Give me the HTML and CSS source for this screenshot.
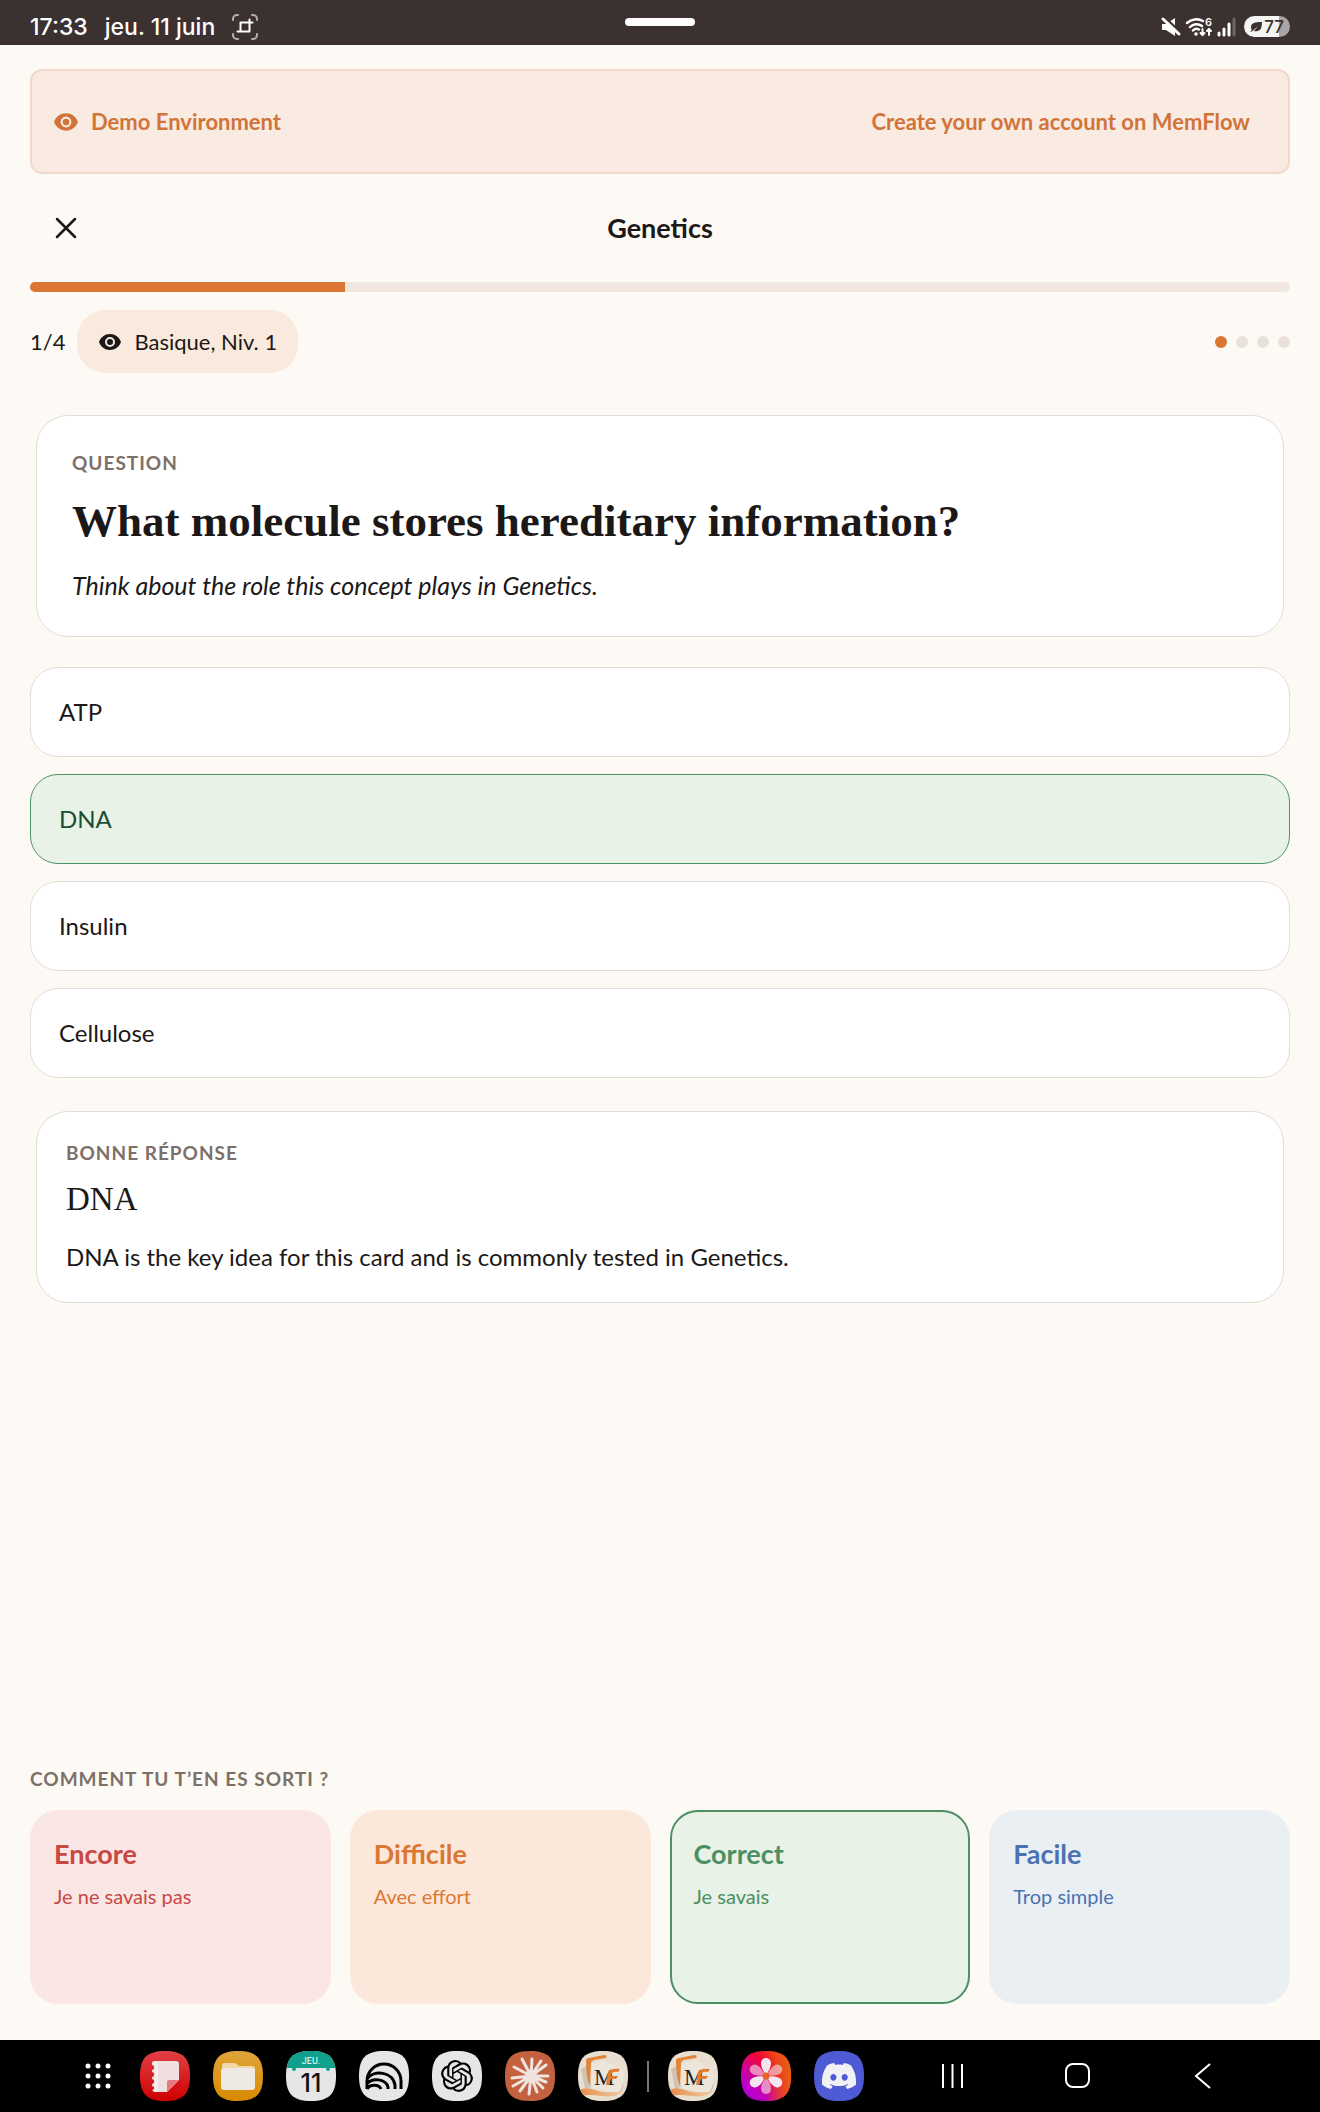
FILE: index.html
```html
<!DOCTYPE html>
<html lang="fr">
<head>
    <meta charset="UTF-8">
    <meta name="viewport" content="width=device-width, initial-scale=1.0">
    <title>MemFlow - Genetics</title>
    <link rel="stylesheet" href="styles.css">
</head>
<body>
    <header class="status-bar">
        <div class="status-left">
            <span>17:33</span>
            <span>jeu. 11 juin</span>
            <svg width="26" height="26" viewBox="0 0 26 26" fill="none" stroke="#fff" stroke-linecap="round">
                <path d="M1 6V5a4 4 0 0 1 4-4h1M20 1h1a4 4 0 0 1 4 4v1M25 20v1a4 4 0 0 1-4 4h-1M6 25H5a4 4 0 0 1-4-4v-1" stroke="#b5afae" stroke-width="2"/>
                <path d="M8.500 8.500h12M8.500 8.500v9M5.500 17.500h12M17.500 5.500v12" stroke-width="2"/>
            </svg>
        </div>
        <div class="drag-handle"></div>
        <div class="status-right">
            <svg width="20" height="20" viewBox="0 0 20 20">
                <path d="M1 7h4l9-6v18l-9-6H1z" fill="#fff"/>
                <path d="M3 0l17 16" stroke="#3b3130" stroke-width="3"/>
                <path d="M2 2l16 15" stroke="#fff" stroke-width="3" stroke-linecap="round"/>
            </svg>
            <svg width="28" height="20" viewBox="0 0 28 20" fill="none" stroke="#fff" stroke-width="2.500" stroke-linecap="round">
                <path d="M2 6a14 14 0 0 1 16-2M5 10a9 9 0 0 1 12-1M8 13.500a5 5 0 0 1 6-1"/>
                <circle cx="11" cy="17" r="1.800" fill="#fff" stroke="none"/>
                <path d="M17.500 12v6m-2-2l2 2 2-2M24 18v-6m-2 2l2-2 2 2" stroke-width="2"/>
                <text x="20" y="9" class="wifi-mark">6</text>
            </svg>
            <svg width="20" height="20" viewBox="0 0 20 20" stroke="#fff" stroke-width="3" stroke-linecap="round">
                <path d="M2 16v2M7 12v6M12 7v11"/>
                <path d="M17 2v16" stroke="#6f6766"/>
            </svg>
            <span class="battery">
                <svg width="12" height="10" viewBox="0 0 12 10"><path d="M12 0C5 0 1 1 1 5c0 1 0 2 1 3L0 9.500h2L8 4 4 9c5 1 8-1 8-9z" fill="#3b3130"/></svg>
                77
            </span>
        </div>
    </header>

    <main class="page">
        <div class="banner">
            <div class="banner-label">
                <svg width="26" height="26" viewBox="0 0 24 24" fill="currentColor"><path d="M12 4C7 4 2.700 7.100 1 12c1.700 4.900 6 8 11 8s9.300-3.100 11-8c-1.700-4.900-6-8-11-8zm0 13a5 5 0 1 1 0-10 5 5 0 0 1 0 10zm0-8a3 3 0 1 0 0 6 3 3 0 0 0 0-6z"/></svg>
                <span>Demo Environment</span>
            </div>
            <a href="#">Create your own account on MemFlow</a>
        </div>

        <div class="deck-header">
            <button class="close-button" aria-label="Fermer">
                <svg width="22" height="22" viewBox="0 0 22 22" stroke="currentColor" stroke-width="2.500" stroke-linecap="round"><path d="M2 2l18 18M20 2L2 20"/></svg>
            </button>
            <h1>Genetics</h1>
        </div>

        <div class="progress" role="progressbar" aria-valuenow="25" aria-valuemin="0" aria-valuemax="100" aria-label="Progression">
            <div class="progress-fill" style="width: 25%"></div>
        </div>

        <div class="card-info">
            <span>1/4</span>
            <span class="level-chip">
                <svg width="24" height="24" viewBox="0 0 24 24" fill="currentColor"><path d="M12 4C7 4 2.700 7.100 1 12c1.700 4.900 6 8 11 8s9.300-3.100 11-8c-1.700-4.900-6-8-11-8zm0 13a5 5 0 1 1 0-10 5 5 0 0 1 0 10zm0-8a3 3 0 1 0 0 6 3 3 0 0 0 0-6z"/></svg>
                <span>Basique, Niv. 1</span>
            </span>
            <div class="dots">
                <span class="dot active"></span>
                <span class="dot"></span>
                <span class="dot"></span>
                <span class="dot"></span>
            </div>
        </div>

        <section class="card question">
            <p class="eyebrow">QUESTION</p>
            <h2>What molecule stores hereditary information?</h2>
            <p class="hint">Think about the role this concept plays in Genetics.</p>
        </section>

        <div class="options">
            <button class="option">ATP</button>
            <button class="option correct">DNA</button>
            <button class="option">Insulin</button>
            <button class="option">Cellulose</button>
        </div>

        <section class="card answer">
            <p class="eyebrow">BONNE RÉPONSE</p>
            <h3>DNA</h3>
            <p>DNA is the key idea for this card and is commonly tested in Genetics.</p>
        </section>

        <section class="rating">
            <p class="eyebrow">COMMENT TU T’EN ES SORTI ?</p>
            <div class="rating-grid">
                <button class="rate again"><strong>Encore</strong><span>Je ne savais pas</span></button>
                <button class="rate hard"><strong>Difficile</strong><span>Avec effort</span></button>
                <button class="rate good"><strong>Correct</strong><span>Je savais</span></button>
                <button class="rate easy"><strong>Facile</strong><span>Trop simple</span></button>
            </div>
        </section>
    </main>

    <svg class="defs" width="0" height="0" aria-hidden="true">
        <defs>
            <path id="tile" d="M25 0C43 0 50 7 50 25S43 50 25 50 0 43 0 25 7 0 25 0z"/>
            <clipPath id="tile-clip"><use href="#tile"/></clipPath>
            <linearGradient id="red" x2="0" y2="1"><stop stop-color="#e04045"/><stop offset="1" stop-color="#cf0000"/></linearGradient>
            <linearGradient id="amber" x2="0" y2="1"><stop stop-color="#dfa53a"/><stop offset="1" stop-color="#d88a00"/></linearGradient>
            <linearGradient id="bloom" x1="0" y1="1" x2="1" y2="0"><stop stop-color="#a800e8"/><stop offset=".25" stop-color="#c000c0"/><stop offset=".6" stop-color="#f0063c"/><stop offset="1" stop-color="#f06000"/></linearGradient>
            <linearGradient id="bloom-warm" x2="1" y2="0"><stop offset=".5" stop-color="#e86010" stop-opacity="0"/><stop offset="1" stop-color="#e86010"/></linearGradient>
            <linearGradient id="wave" x2="1" y2="0"><stop stop-color="#e88a45"/><stop offset="1" stop-color="#eccfa9"/></linearGradient>
            <symbol id="memflow" viewBox="0 0 50 50">
                <g clip-path="url(#tile-clip)">
                    <path d="M0 0h50v50H0z" fill="#e8dfd1"/>
                    <path d="M3 18l4 20 6-2-3-22z" fill="#cfc3b4"/>
                    <path d="M8 10q0-3 3-3l15-3q4 0 2 3l-12 2q-3 1-3 4l-1 22q-4-8-4-25z" fill="#e2853a"/>
                    <path d="M14 12l13-3 14 8q5 1 5 6l-3 17q-1 4-6 3L13 36z" fill="#ece5da"/>
                    <path d="M17 40q10 5 20 4 6-1 8-10" fill="none" stroke="#c8bcae"/>
                    <path d="M0 40q7-5 17-1t29 1q-8 7-22 5T0 45z" fill="url(#wave)"/>
                </g>
                <text x="16" y="34" class="logo-m">M</text>
                <path d="M32 19q4-2 10-1l-2 3q-4-1-6 1l-1 3h7l-2 3h-5l-2 6h-3l2-12z" fill="#e47b2c"/>
            </symbol>
        </defs>
    </svg>

    <nav class="taskbar">
        <div class="apps">
            <button class="app-drawer" aria-label="Applications">
                <svg width="26" height="26" viewBox="0 0 26 26" fill="#fff">
                    <circle cx="3" cy="3" r="2.500"/><circle cx="13" cy="3" r="2.500"/><circle cx="23" cy="3" r="2.500"/>
                    <circle cx="3" cy="13" r="2.500"/><circle cx="13" cy="13" r="2.500"/><circle cx="23" cy="13" r="2.500"/>
                    <circle cx="3" cy="23" r="2.500"/><circle cx="13" cy="23" r="2.500"/><circle cx="23" cy="23" r="2.500"/>
                </svg>
            </button>
            <button aria-label="Notes">
                <svg viewBox="0 0 50 50">
                    <use href="#tile" fill="url(#red)"/>
                    <path d="M14 10h22q3 0 3 3v16l-12 12H14l-2-2q3-1 2-3l-2-1v-2q3-1 2-4l-2-1v-2q3-1 2-4l-2-1v-2q3-1 2-4l-2-1v-3z" fill="#efdfdf"/>
                    <path d="M14 10h4v31h-4z" fill="#fff" opacity=".4"/>
                    <path d="M27 41V31q0-2 2-2h10z" fill="#e57b7c"/>
                    <path d="M27 42l13-13v13z" fill="#d40d10"/>
                </svg>
            </button>
            <button aria-label="Mes fichiers">
                <svg viewBox="0 0 50 50">
                    <use href="#tile" fill="url(#amber)"/>
                    <path d="M9 15q0-3 3-3h10l4 3h13q3 0 3 3v10H9z" fill="#f0d9a8"/>
                    <rect x="8" y="17" width="34" height="22" rx="3" fill="#eee9e2"/>
                </svg>
            </button>
            <button aria-label="Calendrier">
                <svg viewBox="0 0 50 50">
                    <use href="#tile" fill="#e6e6e6"/>
                    <path d="M0 17h50v-17H0z" fill="#10a08c" clip-path="url(#tile-clip)"/>
                    <circle cx="8" cy="18" r="2" fill="#10a08c"/><circle cx="42" cy="18" r="2" fill="#10a08c"/>
                    <text x="25" y="13" class="cal-day">JEU.</text>
                    <text x="25" y="41" class="cal-date">11</text>
                </svg>
            </button>
            <button aria-label="NotebookLM">
                <svg viewBox="0 0 50 50">
                    <use href="#tile" fill="#e6e6e6"/>
                    <path d="M8 38v-8a17 17 0 0 1 34 0v8M8 28c7-10 26-7 28 6v4M8 33c5-7 19-5 21 3v2M8 38c3-5 12-5 14 0" fill="none" stroke="#000" stroke-width="3"/>
                </svg>
            </button>
            <button aria-label="ChatGPT">
                <svg viewBox="0 0 50 50">
                    <use href="#tile" fill="#e6e6e6"/>
                    <path transform="translate(9 9) scale(1.330)" d="M22.2819 9.8211a5.9847 5.9847 0 0 0-.5157-4.9108 6.0462 6.0462 0 0 0-6.5098-2.9A6.0651 6.0651 0 0 0 4.9807 4.1818a5.9847 5.9847 0 0 0-3.9977 2.9 6.0462 6.0462 0 0 0 .7427 7.0966 5.98 5.98 0 0 0 .511 4.9107 6.051 6.051 0 0 0 6.5146 2.9001A5.9847 5.9847 0 0 0 13.2599 24a6.0557 6.0557 0 0 0 5.7718-4.2058 5.9894 5.9894 0 0 0 3.9977-2.9001 6.0557 6.0557 0 0 0-.7475-7.0729zm-9.022 12.6081a4.4755 4.4755 0 0 1-2.8764-1.0408l.1419-.0804 4.7783-2.7582a.7948.7948 0 0 0 .3927-.6813v-6.7369l2.02 1.1686a.071.071 0 0 1 .038.052v5.5826a4.504 4.504 0 0 1-4.4945 4.4944zm-9.6607-4.1254a4.4708 4.4708 0 0 1-.5346-3.0137l.142.0852 4.783 2.7582a.7712.7712 0 0 0 .7806 0l5.8428-3.3685v2.3324a.0804.0804 0 0 1-.0332.0615L9.74 19.9502a4.4992 4.4992 0 0 1-6.1408-1.6464zM2.3408 7.8956a4.485 4.485 0 0 1 2.3655-1.9728V11.6a.7664.7664 0 0 0 .3879.6765l5.8144 3.3543-2.0201 1.1685a.0757.0757 0 0 1-.071 0l-4.8303-2.7865A4.504 4.504 0 0 1 2.3408 7.872zm16.5963 3.8558L13.1038 8.364 15.1192 7.2a.0757.0757 0 0 1 .071 0l4.8303 2.7913a4.4944 4.4944 0 0 1-.6765 8.1042v-5.6772a.79.79 0 0 0-.407-.667zm2.0107-3.0231l-.142-.0852-4.7735-2.7818a.7759.7759 0 0 0-.7854 0L9.409 9.2297V6.8974a.0662.0662 0 0 1 .0284-.0615l4.8303-2.7866a4.4992 4.4992 0 0 1 6.6802 4.66zM8.3065 12.863l-2.02-1.1638a.0804.0804 0 0 1-.038-.0567V6.0742a4.4992 4.4992 0 0 1 7.3757-3.4537l-.142.0805L8.704 5.459a.7948.7948 0 0 0-.3927.6813zm1.0976-2.3654l2.602-1.4998 2.6069 1.4998v2.9994l-2.5974 1.4997-2.6067-1.4997Z"/>
                </svg>
            </button>
            <button aria-label="Claude">
                <svg viewBox="0 0 50 50">
                    <use href="#tile" fill="#c4623f"/>
                    <path d="M26 25L17 8M26 25l1-17M26 25L36 10M26 25l15-11M26 25l17 0M26 25l15 6M26 25l12 12M26 25l6 16M26 25l-2 18M26 25L15 40M26 25L8 35M26 25L7 27M26 25L9 16" stroke="#efe4de" stroke-width="3" stroke-linecap="round"/>
                    <circle cx="26" cy="25" r="6" fill="#efe4de"/>
                </svg>
            </button>
            <button aria-label="MemFlow"><svg><use href="#memflow"/></svg></button>
            <span class="divider"></span>
            <button aria-label="MemFlow"><svg><use href="#memflow"/></svg></button>
            <button aria-label="Galerie">
                <svg viewBox="0 0 50 50">
                    <use href="#tile" fill="url(#bloom)"/>
                    <use href="#tile" fill="url(#bloom-warm)"/>
                    <g fill="#f3e6ee">
                        <path id="petal" d="M25 24c-3-4-5-8-5-12a5 5 0 0 1 10 0c0 4-2 8-5 12z"/>
                        <use href="#petal" transform="rotate(120 25 25)"/>
                        <use href="#petal" transform="rotate(240 25 25)"/>
                        <use href="#petal" transform="rotate(60 25 25)" opacity=".6"/>
                        <use href="#petal" transform="rotate(180 25 25)" opacity=".6"/>
                        <use href="#petal" transform="rotate(300 25 25)" opacity=".6"/>
                    </g>
                    <circle cx="25" cy="25" r="3.500" fill="#e8641c"/>
                </svg>
            </button>
            <button aria-label="Discord">
                <svg viewBox="0 0 50 50">
                    <use href="#tile" fill="#4f5bd5"/>
                    <path transform="translate(8 8) scale(1.420)" fill="#f1f1f5" d="M20.317 4.3698a19.7913 19.7913 0 0 0-4.8851-1.5152.0741.0741 0 0 0-.0785.0371c-.211.3753-.4447.8648-.6083 1.2495-1.8447-.2762-3.68-.2762-5.4868 0-.1636-.3933-.4058-.8742-.6177-1.2495a.077.077 0 0 0-.0785-.037 19.7363 19.7363 0 0 0-4.8852 1.515.0699.0699 0 0 0-.0321.0277C.5334 9.0458-.319 13.5799.0992 18.0578a.0824.0824 0 0 0 .0312.0561c2.0528 1.5076 4.0413 2.4228 5.9929 3.0294a.0777.0777 0 0 0 .0842-.0276c.4616-.6304.8731-1.2952 1.226-1.9942a.076.076 0 0 0-.0416-.1057c-.6528-.2476-1.2743-.5495-1.8722-.8923a.077.077 0 0 1-.0076-.1277c.1258-.0943.2517-.1923.3718-.2914a.0743.0743 0 0 1 .0776-.0105c3.9278 1.7933 8.18 1.7933 12.0614 0a.0739.0739 0 0 1 .0785.0095c.1202.099.246.1981.3728.2924a.077.077 0 0 1-.0066.1276 12.2986 12.2986 0 0 1-1.873.8914.0766.0766 0 0 0-.0407.1067c.3604.698.7719 1.3628 1.225 1.9932a.076.076 0 0 0 .0842.0286c1.961-.6067 3.9495-1.5219 6.0023-3.0294a.077.077 0 0 0 .0313-.0552c.5004-5.177-.8382-9.6739-3.5485-13.6604a.061.061 0 0 0-.0312-.0286zM8.02 15.3312c-1.1825 0-2.1569-1.0857-2.1569-2.419 0-1.3332.9555-2.4189 2.157-2.4189 1.2108 0 2.1757 1.0952 2.1568 2.419 0 1.3332-.9555 2.4189-2.1569 2.4189zm7.9748 0c-1.1825 0-2.1569-1.0857-2.1569-2.419 0-1.3332.9554-2.4189 2.1569-2.4189 1.2108 0 2.1757 1.0952 2.1568 2.419 0 1.3332-.946 2.4189-2.1568 2.4189Z"/>
                </svg>
            </button>
        </div>
        <div class="system-nav">
            <button aria-label="Récents"><svg viewBox="0 0 50 50" fill="none" stroke="#fff" stroke-width="2"><path d="M16 13v24M25.500 13v24M35 13v24"/></svg></button>
            <button aria-label="Accueil"><svg viewBox="0 0 50 50" fill="none" stroke="#fff" stroke-width="2"><rect x="14" y="13" width="23" height="23" rx="7"/></svg></button>
            <button aria-label="Retour"><svg viewBox="0 0 50 50" fill="none" stroke="#fff" stroke-width="2"><path d="M33 13L19 25l14 12"/></svg></button>
        </div>
    </nav>
</body>
</html>
```
FILE: styles.css
```css
* {
    box-sizing: border-box;
}

body {
    font-family: Lato, sans-serif;
    font-size: 24px;
    line-height: 32px;
    margin: 0;
    min-height: 100vh;
    display: flex;
    flex-direction: column;
    background-color: #fdfaf5;
    color: #1b1817;
}

h1, h2, h3, p {
    margin: 0;
}

button {
    font: inherit;
    color: inherit;
    border: none;
    background: none;
    padding: 0;
    text-align: left;
    cursor: pointer;
}

svg {
    display: block;
    overflow: visible;
}

.defs {
    position: absolute;
}

/* System status bar */
.status-bar {
    display: grid;
    grid-template-columns: 1fr auto 1fr;
    align-items: center;
    padding: 8px 30px 0;
    height: 45px;
    background-color: #3b3130;
    color: #fff;
    font-family: Inter, sans-serif;
    font-size: 23px;
    font-weight: 500;
}

.status-left, .status-right {
    display: flex;
    align-items: center;
    gap: 17px;
}

.status-right {
    justify-content: flex-end;
    gap: 4px;
}

.drag-handle {
    width: 70px;
    height: 8px;
    margin-bottom: 10px;
    border-radius: 4px;
    background-color: #fff;
}

.wifi-mark {
    font-size: 11px;
    font-weight: 600;
    fill: #fff;
    stroke: none;
}

.battery {
    display: flex;
    align-items: center;
    gap: 2px;
    height: 21px;
    margin-left: 3px;
    padding: 0 6px;
    border-radius: 11px;
    background: linear-gradient(to right, #f5f4f4 77%, #aaa5a4 77%);
    color: #3b3130;
    font-size: 17px;
}

/* Page */
.page {
    flex: 1;
    display: flex;
    flex-direction: column;
    padding: 24px 30px 36px;
}

.banner {
    display: flex;
    align-items: center;
    justify-content: space-between;
    height: 105px;
    padding: 0 38px 0 21px;
    border: 2px solid #f1d9c9;
    border-radius: 12px;
    background-color: #f9ebe1;
    color: #d1743a;
    font-size: 22px;
    font-weight: 700;
}

.banner-label {
    display: flex;
    align-items: center;
    gap: 12px;
}

.banner a {
    color: inherit;
    text-decoration: none;
}

.deck-header {
    display: grid;
    grid-template-columns: 1fr auto 1fr;
    align-items: center;
    height: 108px;
    padding: 0 25px;
}

.deck-header h1 {
    font-size: 27px;
    font-weight: 700;
}

.close-button {
    justify-self: start;
}

.progress {
    height: 10px;
    border-radius: 5px;
    overflow: hidden;
    background-color: #f2e7de;
}

.progress-fill {
    height: 100%;
    background-color: #db7732;
}

.card-info {
    display: flex;
    align-items: center;
    gap: 12px;
    margin-top: 18px;
    font-size: 22px;
}

.level-chip {
    display: flex;
    align-items: center;
    gap: 12px;
    height: 63px;
    padding: 0 21px;
    border-radius: 28px;
    background-color: #faeadd;
}

.dots {
    display: flex;
    gap: 9px;
    margin-left: auto;
}

.dot {
    width: 12px;
    height: 12px;
    border-radius: 50%;
    background-color: #e8e0d9;
}

.dot.active {
    background-color: #db7732;
}

/* Question, options and answer */
.card {
    margin: 0 6px;
    border: 1px solid #e4ddd7;
    border-radius: 32px;
    background-color: #fff;
}

.eyebrow {
    font-size: 19px;
    line-height: 24px;
    font-weight: 700;
    letter-spacing: 1px;
    color: #7c7069;
}

.question {
    margin-top: 42px;
    padding: 35px;
}

.question h2 {
    margin: 18px 0 20px;
    font-family: "Liberation Serif", serif;
    font-size: 45px;
    line-height: 56px;
    font-weight: 700;
}

.hint {
    font-size: 25px;
    font-style: italic;
}

.options {
    display: flex;
    flex-direction: column;
    gap: 17px;
    margin: 30px 0 33px;
}

.option {
    height: 90px;
    padding: 0 28px;
    border: 1px solid #e4ddd7;
    border-radius: 28px;
    background-color: #fff;
}

.option.correct {
    border-color: #4d9465;
    background-color: #e8f2e7;
    color: #1c4c31;
}

.answer {
    padding: 29px;
}

.answer h3 {
    margin: 12px 0 20px;
    font-family: "Liberation Serif", serif;
    font-size: 33px;
    line-height: 44px;
    font-weight: 400;
}

/* Self rating */
.rating {
    margin-top: auto;
}

.rating-grid {
    display: grid;
    grid-template-columns: repeat(4, 1fr);
    gap: 19px;
    margin-top: 19px;
}

.rate {
    display: flex;
    flex-direction: column;
    gap: 12px;
    height: 194px;
    padding: 26px 22px;
    border: 2px solid transparent;
    border-radius: 28px;
}

.rate strong {
    font-size: 27px;
    font-weight: 700;
}

.rate span {
    font-size: 20px;
    line-height: 28px;
}

.again {
    background-color: #fae6e4;
    color: #c84844;
}

.hard {
    background-color: #fce8da;
    color: #db7732;
}

.good {
    border-color: #4b8f62;
    background-color: #e8f2e7;
    color: #4b8f62;
}

.easy {
    background-color: #eaeff4;
    color: #4a72b0;
}

/* System task bar */
.taskbar {
    display: flex;
    align-items: center;
    justify-content: space-between;
    height: 72px;
    padding: 0 93px 0 85px;
    background-color: #000;
}

.apps, .system-nav {
    display: flex;
    align-items: center;
    gap: 23px;
}

.apps svg, .system-nav svg {
    width: 50px;
    height: 50px;
}

.app-drawer {
    margin-right: 6px;
}

.apps .app-drawer svg {
    width: 26px;
    height: 26px;
}

.system-nav {
    gap: 75px;
}

.divider {
    width: 2px;
    height: 31px;
    margin: 0 -4px;
    background-color: #777;
}

.cal-day {
    font-family: Roboto, sans-serif;
    font-size: 9px;
    text-anchor: middle;
    fill: #fff;
}

.cal-date {
    font-family: Inter, sans-serif;
    font-size: 25px;
    font-weight: 500;
    text-anchor: middle;
    fill: #111;
}

.logo-m {
    font-family: "Liberation Serif", serif;
    font-size: 23px;
    fill: #222;
}
```
